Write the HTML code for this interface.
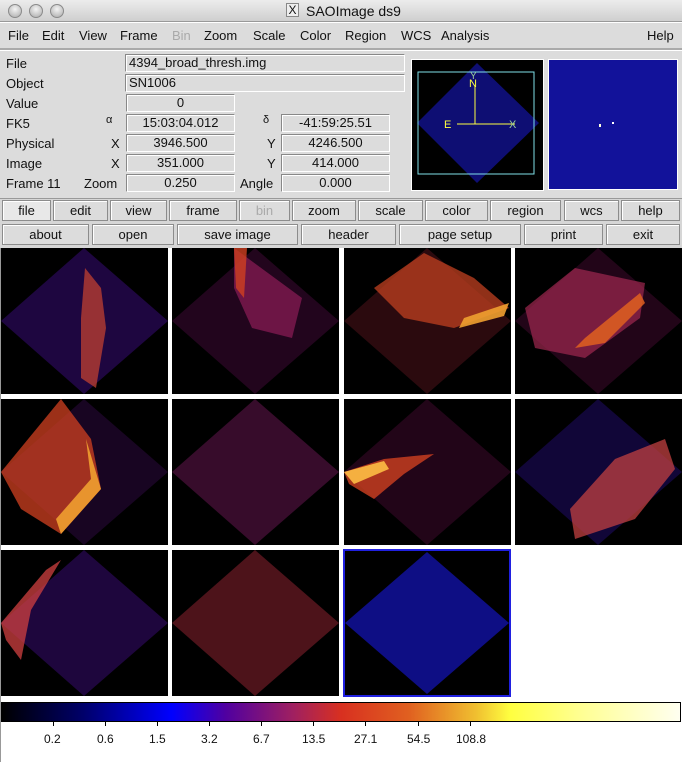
<!DOCTYPE html>
<html><head><style>
*{margin:0;padding:0;box-sizing:border-box}
body{width:682px;height:762px;background:#fff;font-family:"Liberation Sans","DejaVu Sans",sans-serif;font-size:13px;color:#111;position:relative;overflow:hidden}
.a{position:absolute}
.title{left:0;top:0;width:682px;height:22px;background:linear-gradient(#ececec,#cfcfcf);border-bottom:1px solid #999}
.dot{width:14px;height:14px;border-radius:50%;background:radial-gradient(circle at 50% 35%,#f4f4f4,#a9a9a9);border:1px solid #8a8a8a;top:4px}
.menu{left:0;top:23px;width:682px;height:27px;background:#dcdcdc;border-bottom:2px solid #aaa}
.menu span{position:absolute;top:5px}
.panel{left:0;top:51px;width:682px;height:148px;background:#dcdcdc}
.lbl{position:absolute;font-size:13px}
.fld{position:absolute;height:18px;background:#dcdcdc;border:1px solid #888;border-right-color:#fff;border-bottom-color:#fff;box-shadow:inset 1px 1px 0 #fff;text-align:center;line-height:16px;font-size:13px}
.btnrow{left:0;top:198px;width:682px;height:50px;background:#d6d6d6;border-top:1px solid #999}
.b{position:absolute;height:21px;background:#dcdcdc;border:1px solid #8c8c8c;box-shadow:inset 1px 1px 0 #fff;text-align:center;line-height:19px;font-size:13px}
.tile{position:absolute;background:#000}
</style></head><body>
<div class="a title">
<div class="a dot" style="left:8px"></div><div class="a dot" style="left:29px"></div><div class="a dot" style="left:50px"></div>
<div class="a" style="left:286px;top:3px;width:13px;height:14px;border:1px solid #888;background:#eee;font-size:12px;line-height:12px;text-align:center">X</div>
<div class="a" style="left:306px;top:3px;font-size:14px">SAOImage ds9</div>
</div>
<div class="a menu">
<span style="left:8px">File</span><span style="left:42px">Edit</span><span style="left:79px">View</span><span style="left:120px">Frame</span><span style="left:172px;color:#aaa">Bin</span><span style="left:204px">Zoom</span><span style="left:253px">Scale</span><span style="left:300px">Color</span><span style="left:345px">Region</span><span style="left:401px">WCS</span><span style="left:441px">Analysis</span><span style="left:647px">Help</span>
</div>
<div class="a panel">
<div class="lbl" style="left:6px;top:5px">File</div>
<div class="lbl" style="left:6px;top:25px">Object</div>
<div class="lbl" style="left:6px;top:45px">Value</div>
<div class="lbl" style="left:6px;top:65px">FK5</div>
<div class="lbl" style="left:6px;top:85px">Physical</div>
<div class="lbl" style="left:6px;top:105px">Image</div>
<div class="lbl" style="left:6px;top:125px">Frame 11</div>
<div class="lbl" style="left:106px;top:63px;font-size:11px">α</div>
<div class="lbl" style="left:111px;top:85px">X</div>
<div class="lbl" style="left:111px;top:105px">X</div>
<div class="lbl" style="left:84px;top:125px">Zoom</div>
<div class="lbl" style="left:263px;top:63px;font-size:11px">δ</div>
<div class="lbl" style="left:267px;top:85px">Y</div>
<div class="lbl" style="left:267px;top:105px">Y</div>
<div class="lbl" style="left:240px;top:125px">Angle</div>
<div class="fld" style="left:125px;top:3px;width:280px;text-align:left;padding-left:3px">4394_broad_thresh.img</div>
<div class="fld" style="left:125px;top:23px;width:280px;text-align:left;padding-left:3px">SN1006</div>
<div class="fld" style="left:126px;top:43px;width:109px">0</div>
<div class="fld" style="left:126px;top:63px;width:109px">15:03:04.012</div>
<div class="fld" style="left:126px;top:83px;width:109px">3946.500</div>
<div class="fld" style="left:126px;top:103px;width:109px">351.000</div>
<div class="fld" style="left:126px;top:123px;width:109px">0.250</div>
<div class="fld" style="left:281px;top:63px;width:109px">-41:59:25.51</div>
<div class="fld" style="left:281px;top:83px;width:109px">4246.500</div>
<div class="fld" style="left:281px;top:103px;width:109px">414.000</div>
<div class="fld" style="left:281px;top:123px;width:109px">0.000</div>
<svg class="a" style="left:411px;top:8px" width="133" height="132">
<rect x="0" y="0" width="133" height="132" fill="#000" stroke="#fff" stroke-width="2"/>
<polygon points="66,4 128,64 66,124 6,64" fill="#1818c0" opacity="0.6"/>
<rect x="7" y="13" width="116" height="102" fill="none" stroke="#7fe0e8" stroke-width="1"/>
<line x1="64" y1="65" x2="64" y2="27" stroke="#ffff40" stroke-width="1"/>
<line x1="64" y1="65" x2="46" y2="65" stroke="#ffff40"/>
<line x1="64" y1="65" x2="104" y2="65" stroke="#ffff40"/>
<text x="58" y="28" fill="#ffff40" font-size="11" font-family="Liberation Sans">N</text>
<text x="59" y="20" fill="#9c9" font-size="10" font-family="Liberation Sans">Y</text>
<text x="33" y="69" fill="#ffff40" font-size="11" font-family="Liberation Sans">E</text>
<text x="98" y="69" fill="#9c9" font-size="11" font-family="Liberation Sans">X</text>
</svg>
<svg class="a" style="left:548px;top:8px" width="130" height="131">
<rect x="0" y="0" width="130" height="131" fill="#12129a" stroke="#fff" stroke-width="2"/>
<rect x="64" y="63" width="2" height="2" fill="#fff"/>
<rect x="51" y="65" width="2" height="3" fill="#ffd"/>
</svg>
</div>
<div class="a btnrow">
<div class="b" style="left:2px;top:1px;width:49px;background:#e8e8e8">file</div>
<div class="b" style="left:53px;top:1px;width:55px">edit</div>
<div class="b" style="left:110px;top:1px;width:57px">view</div>
<div class="b" style="left:169px;top:1px;width:68px">frame</div>
<div class="b" style="left:239px;top:1px;width:51px;color:#aaa">bin</div>
<div class="b" style="left:292px;top:1px;width:64px">zoom</div>
<div class="b" style="left:358px;top:1px;width:65px">scale</div>
<div class="b" style="left:425px;top:1px;width:63px">color</div>
<div class="b" style="left:490px;top:1px;width:71px">region</div>
<div class="b" style="left:564px;top:1px;width:55px">wcs</div>
<div class="b" style="left:621px;top:1px;width:59px">help</div>
<div class="b" style="left:2px;top:25px;width:87px">about</div>
<div class="b" style="left:92px;top:25px;width:82px">open</div>
<div class="b" style="left:177px;top:25px;width:121px">save image</div>
<div class="b" style="left:301px;top:25px;width:95px">header</div>
<div class="b" style="left:399px;top:25px;width:122px">page setup</div>
<div class="b" style="left:524px;top:25px;width:79px">print</div>
<div class="b" style="left:606px;top:25px;width:74px">exit</div>
</div>
<div class="a" style="left:0;top:248px;width:1px;height:514px;background:#999"></div>

<!-- row 1 -->
<svg class="tile" style="left:1px;top:248px" width="167" height="146"><polygon points="83,0 167,73 83,146 0,73" fill="#4a10a0" opacity="0.4"/><polygon points="84,20 100,40 105,80 95,140 80,130 80,70" fill="#c04030" opacity="0.75"/></svg>
<svg class="tile" style="left:172px;top:248px" width="167" height="146"><polygon points="83,0 167,73 83,146 0,73" fill="#701060" opacity="0.3"/><polygon points="62,0 130,50 120,90 80,80 62,40" fill="#a02060" opacity="0.6"/><polygon points="62,0 75,0 72,50 64,40" fill="#d04020" opacity="0.8"/></svg>
<svg class="tile" style="left:344px;top:248px" width="167" height="146"><polygon points="83,0 167,73 83,146 0,73" fill="#902030" opacity="0.3"/><polygon points="30,40 80,5 130,30 165,60 110,80 60,70" fill="#c04020" opacity="0.75"/><polygon points="120,70 165,55 160,68 115,80" fill="#f0a030" opacity="0.9"/></svg>
<svg class="tile" style="left:515px;top:248px" width="167" height="146"><polygon points="83,0 167,73 83,146 0,73" fill="#701050" opacity="0.3"/><polygon points="10,60 60,20 130,35 125,70 70,110 20,100" fill="#a02850" opacity="0.7"/><polygon points="125,45 130,55 90,95 60,100 70,90" fill="#e06020" opacity="0.85"/></svg>
<!-- row 2 -->
<svg class="tile" style="left:1px;top:399px" width="167" height="146"><polygon points="83,0 167,73 83,146 0,73" fill="#501070" opacity="0.3"/><polygon points="0,73 60,0 90,40 100,90 60,135 20,110" fill="#d04020" opacity="0.75"/><polygon points="85,40 100,90 60,135 55,120 90,80" fill="#f0a030" opacity="0.9"/></svg>
<svg class="tile" style="left:172px;top:399px" width="167" height="146"><polygon points="83,0 167,73 83,146 0,73" fill="#902070" opacity="0.38"/></svg>
<svg class="tile" style="left:344px;top:399px" width="167" height="146"><polygon points="83,0 167,73 83,146 0,73" fill="#701050" opacity="0.3"/><polygon points="0,73 40,60 90,55 60,75 30,100 5,85" fill="#d04020" opacity="0.8"/><polygon points="0,73 40,62 45,70 10,85" fill="#f5b040"/></svg>
<svg class="tile" style="left:515px;top:399px" width="167" height="146"><polygon points="83,0 167,73 83,146 0,73" fill="#3010a0" opacity="0.35"/><polygon points="150,40 160,70 120,120 60,140 55,110 100,60" fill="#c04040" opacity="0.75"/></svg>
<!-- row 3 -->
<svg class="tile" style="left:1px;top:550px" width="167" height="146"><polygon points="83,0 167,73 83,146 0,73" fill="#5010a0" opacity="0.38"/><polygon points="0,73 45,20 60,10 30,60 20,110 5,90" fill="#d04040" opacity="0.75"/></svg>
<svg class="tile" style="left:172px;top:550px" width="167" height="146"><polygon points="83,0 167,73 83,146 0,73" fill="#c03040" opacity="0.4"/></svg>
<svg class="tile" style="left:343px;top:549px" width="168" height="148"><rect x="1" y="1" width="166" height="146" fill="#000" stroke="#2020e0" stroke-width="2"/><polygon points="84,3 166,74 84,145 2,74" fill="#1a1af0" opacity="0.55"/></svg>

<div class="a" style="left:1px;top:702px;width:680px;height:20px;border:1px solid #000;background:linear-gradient(90deg,#000 0%,#00006a 12%,#0000ff 25%,#5000a0 33%,#a02060 43%,#d83020 50%,#e06020 60%,#f0c030 70%,#ffff40 75%,#ffff90 85%,#fffff0 100%)"></div>
<div class="a" style="left:0;top:722px;width:682px;height:40px;font-size:12px">
<div class="a" style="left:53px;top:0;width:1px;height:4px;background:#000"></div><div class="a" style="left:44px;top:10px">0.2</div>
<div class="a" style="left:105px;top:0;width:1px;height:4px;background:#000"></div><div class="a" style="left:97px;top:10px">0.6</div>
<div class="a" style="left:157px;top:0;width:1px;height:4px;background:#000"></div><div class="a" style="left:149px;top:10px">1.5</div>
<div class="a" style="left:209px;top:0;width:1px;height:4px;background:#000"></div><div class="a" style="left:201px;top:10px">3.2</div>
<div class="a" style="left:261px;top:0;width:1px;height:4px;background:#000"></div><div class="a" style="left:253px;top:10px">6.7</div>
<div class="a" style="left:313px;top:0;width:1px;height:4px;background:#000"></div><div class="a" style="left:302px;top:10px">13.5</div>
<div class="a" style="left:365px;top:0;width:1px;height:4px;background:#000"></div><div class="a" style="left:354px;top:10px">27.1</div>
<div class="a" style="left:418px;top:0;width:1px;height:4px;background:#000"></div><div class="a" style="left:407px;top:10px">54.5</div>
<div class="a" style="left:470px;top:0;width:1px;height:4px;background:#000"></div><div class="a" style="left:456px;top:10px">108.8</div>
</div>
</body></html>
